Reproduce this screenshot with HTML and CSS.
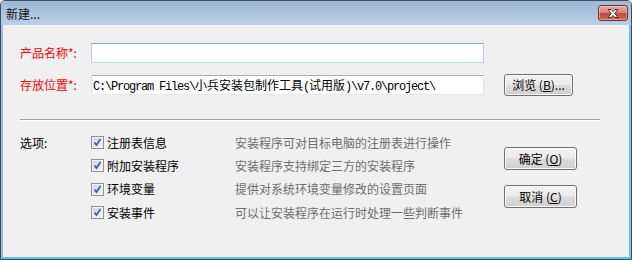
FILE: index.html
```html
<!DOCTYPE html>
<html lang="zh-CN">
<head>
<meta charset="utf-8">
<title>新建...</title>
<link rel="stylesheet" href="styles.css">
</head>
<body>
<div class="window">
  <div class="titlebar">
    <span class="title">新建...</span>
    <button class="close" aria-label="关闭">
      <svg width="14" height="9" viewBox="0 0 14 9">
        <path d="M2 0.5 L5 0.5 L7 2.5 L9 0.5 L12 0.5 L8.8 4.5 L12 8.5 L9 8.5 L7 6.5 L5 8.5 L2 8.5 L5.2 4.5 Z" fill="#fff" stroke="#5a2a25" stroke-width="1" stroke-linejoin="round"/>
      </svg>
    </button>
  </div>
  <div class="frame">
    <div class="content">
      <div class="row row-name">
        <label class="label req">产品名称*:</label>
        <div class="textbox focus"></div>
      </div>
      <div class="row row-path">
        <label class="label req">存放位置*:</label>
        <div class="textbox path"><span>C:\Program Files\</span><span class="cjk">小兵安装包制作工具</span><span>(</span><span class="cjk">试用版</span><span>)\v7.0\project\</span></div>
        <button class="btn browse">浏览 (<u>B</u>)...</button>
      </div>
      <div class="sep"></div>
      <div class="options">
        <div class="label">选项:</div>
        <div class="optgrid">
          <div class="opt"><span class="chk"></span>注册表信息</div>
          <div class="desc">安装程序可对目标电脑的注册表进行操作</div>
          <div class="opt"><span class="chk"></span>附加安装程序</div>
          <div class="desc">安装程序支持绑定三方的安装程序</div>
          <div class="opt"><span class="chk"></span>环境变量</div>
          <div class="desc">提供对系统环境变量修改的设置页面</div>
          <div class="opt"><span class="chk"></span>安装事件</div>
          <div class="desc">可以让安装程序在运行时处理一些判断事件</div>
        </div>
        <div class="actions">
          <button class="btn action">确定 (<u>O</u>)</button>
          <button class="btn action">取消 (<u>C</u>)</button>
        </div>
      </div>
    </div>
  </div>
</div>
</body>
</html>
```

FILE: styles.css
```css
* { box-sizing: border-box; }
html, body { margin: 0; padding: 0; background: #f0f0f0; }
body {
  font-family: "Noto Sans CJK SC", "Liberation Sans", sans-serif;
  font-size: 12px;
  color: #000;
}
.window {
  width: 632px;
  height: 260px;
  border: 1px solid #3f4d5e;
  border-radius: 5px 5px 0 0;
  display: flex;
  flex-direction: column;
  overflow: hidden;
  background: #f0f0f0;
}
.titlebar {
  height: 24px;
  flex: none;
  display: flex;
  justify-content: space-between;
  align-items: flex-start;
  background: linear-gradient(#9fb6d4, #bad0e9);
  padding: 0 3px 0 5px;
}
.title {
  line-height: 16px;
  margin-top: 5px;
  color: #111;
  font-size: 12px;
}
.close {
  width: 30px;
  height: 16px;
  margin-top: 4px;
  padding: 0;
  border: 1px solid #6e342e;
  border-radius: 3px;
  background: linear-gradient(#e6aa9f 0%, #d8867a 45%, #c2473a 55%, #cf6e55 100%);
  box-shadow: inset 0 0 0 1px rgba(255,255,255,0.35);
  display: flex;
  align-items: center;
  justify-content: center;
}
.frame {
  flex: 1;
  border-left: 2px solid #9ab8dc;
  border-right: 2px solid #6cc6ea;
  border-bottom: 2px solid #5cc3ea;
  background: #f0f0f0;
}
.content {
  padding: 18px 29px 0 17px;
}
.row {
  display: flex;
  align-items: center;
}
.row-name { height: 20px; }
.row-path { height: 22px; margin-top: 11px; }
.label {
  width: 71px;
  flex: none;
  line-height: 16px;
}
.req { color: #ff0000; }
.textbox {
  width: 393px;
  height: 20px;
  background: #fff;
  border: 1px solid;
  border-color: #abadb3 #dbdfe6 #e3e9ef #e2e3ea;
}
.textbox.focus {
  border-color: #8fa9c9 #b7cfe8 #bed5ec #b7cfe8;
}
.textbox.path {
  padding-left: 1px;
  font-family: "Liberation Mono", "Noto Sans CJK SC", monospace;
  font-size: 12px;
  letter-spacing: -1.2px;
  line-height: 18px;
  white-space: nowrap;
  overflow: hidden;
}
.textbox.path .cjk {
  font-family: "Noto Sans CJK SC", sans-serif;
  font-size: 12px;
  letter-spacing: 0;
}
.btn {
  font-family: "Noto Sans CJK SC", "Liberation Sans", sans-serif;
  font-size: 12px;
  color: #000;
  border: 1px solid #707070;
  border-radius: 3px;
  background: linear-gradient(#f2f2f2 0%, #ebebeb 48%, #dddddd 52%, #cfcfcf 100%);
  box-shadow: inset 0 0 0 1px #fcfcfc;
  padding: 0;
  display: flex;
  align-items: center;
  justify-content: center;
  line-height: 16px;
}
.btn u { text-decoration: underline; }
.browse {
  width: 69px;
  height: 22px;
  margin-left: 20px;
}
.sep {
  margin-top: 23px;
  height: 2px;
  border-top: 1px solid #a0a0a0;
  border-bottom: 1px solid #fff;
}
.options {
  display: flex;
  margin-top: 10px;
}
.options > .label {
  line-height: 23.33px;
}
.optgrid {
  display: grid;
  grid-template-columns: 144px 269px;
  grid-auto-rows: 23.33px;
  align-items: center;
}
.opt {
  display: flex;
  align-items: center;
  gap: 3px;
  line-height: 16px;
}
.chk {
  width: 13px;
  height: 13px;
  flex: none;
  border: 1px solid #8e8f8f;
  background:
    url("data:image/svg+xml,%3Csvg xmlns='http://www.w3.org/2000/svg' width='11' height='11'%3E%3Cpath d='M2.5 5.5 L4.5 8 L8.5 2' fill='none' stroke='%233b5fb0' stroke-width='1.8'/%3E%3C/svg%3E") center/11px 11px no-repeat,
    linear-gradient(135deg, #cfd3d9, #f6f6f6);
  box-shadow: inset 0 0 0 1px #f4f4f4;
}
.desc {
  color: #6d6d6d;
  line-height: 16px;
  white-space: nowrap;
}
.actions {
  display: flex;
  flex-direction: column;
  gap: 15px;
  padding-top: 16px;
}
.action {
  width: 73px;
  height: 23px;
}
```
